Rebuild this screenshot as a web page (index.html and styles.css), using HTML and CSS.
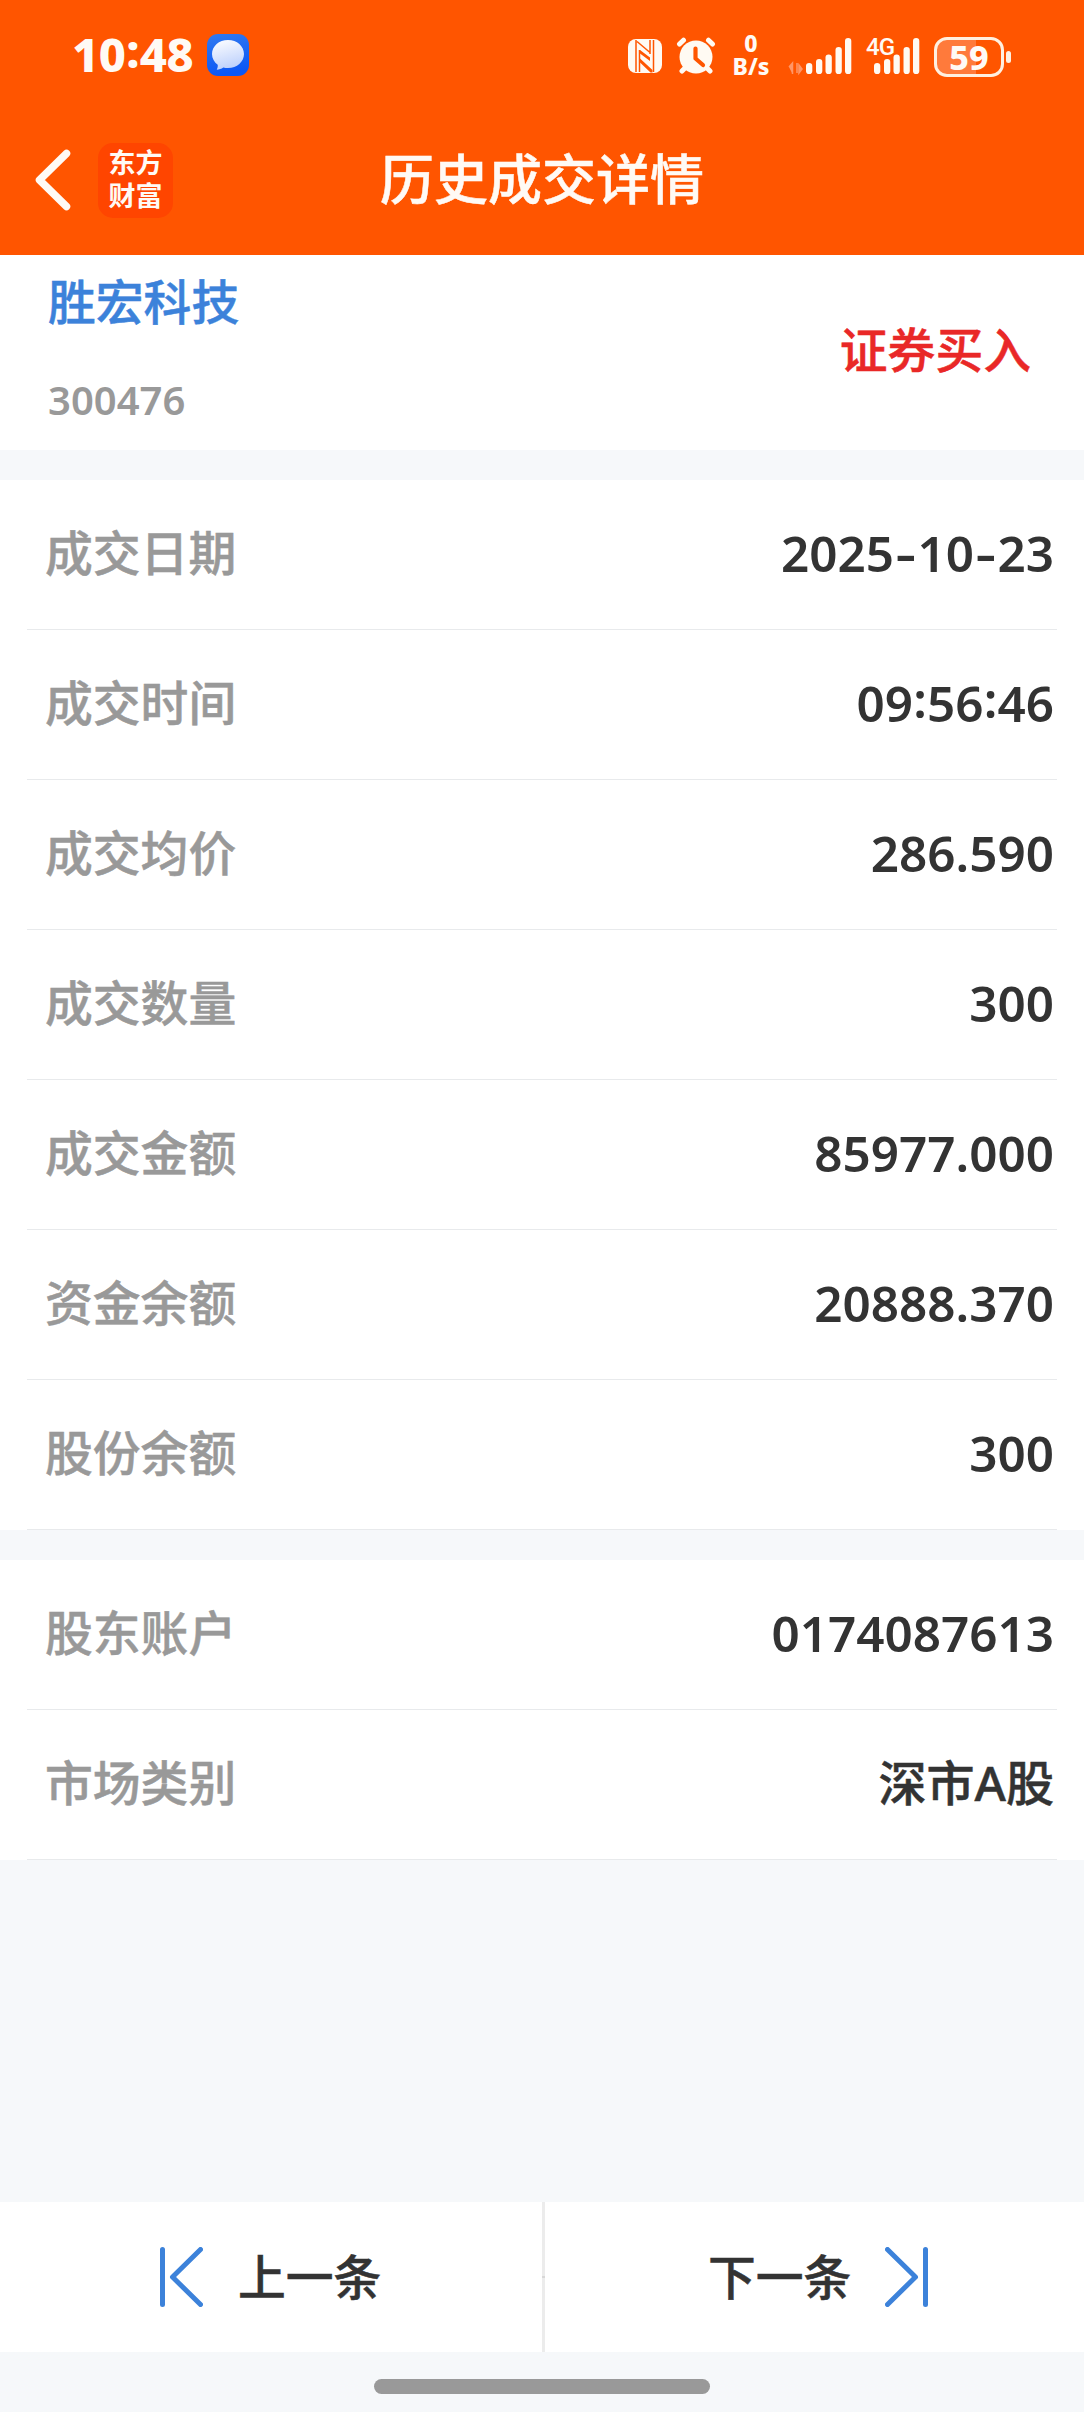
FILE: index.html
```html
<!DOCTYPE html>
<html lang="zh-CN">
<head>
<meta charset="utf-8">
<title>历史成交详情</title>
<link rel="stylesheet" href="styles.css">
</head>
<body>
<div class="screen">
  <header class="header">
    <div class="status">
      <span class="clock">10<i class="sep">:</i>48</span>
      <svg class="chat" width="42" height="42" viewBox="0 0 42 42">
        <defs>
          <linearGradient id="chatBg" x1="0" y1="0" x2="0.2" y2="1"><stop offset="0" stop-color="#317af0"/><stop offset="1" stop-color="#0b57f5"/></linearGradient>
          <linearGradient id="bubble" x1="0" y1="0" x2="0.3" y2="1"><stop offset="0" stop-color="#fff"/><stop offset="1" stop-color="#bfd2fc"/></linearGradient>
        </defs>
        <rect width="42" height="42" rx="11" fill="url(#chatBg)"/>
        <path d="M21 6C12 6 5 12.2 5 20c0 4.400 2.300 8.200 5.700 10.800.3 1.700-.2 3.400-1 4.900 2.500-.2 4.700-1 6.600-2.300C17.800 33.800 19.400 34 21 34c9 0 16-6.200 16-14S30 6 21 6z" fill="url(#bubble)"/>
      </svg>
      <div class="indicators">
        <svg class="nfc" width="34" height="34" viewBox="0 0 34 34">
          <rect width="34" height="34" rx="8" fill="#fffaf3"/>
          <g fill="none" stroke="#ff5500" stroke-width="1.500">
            <path d="M8 1v32M25.500 1v32M9 2.500l13 11M11.500 33V11M22 1v14"/>
          </g>
          <path d="M12 11l10 7.500v3.500L12 14.500zM12 19.500L24.500 31v2.500h-2L12 23.500z" fill="#ff5500"/>
        </svg>
        <svg class="alarm" width="40" height="38" viewBox="0 0 40 38">
          <g fill="none" stroke="#fffaf3" stroke-width="5" stroke-linecap="round">
            <path d="M3.500 7l4-3.800M36.500 7l-4-3.800M6 34l5-5M34 34l-5-5"/>
          </g>
          <circle cx="20" cy="20" r="16.500" fill="#fffaf3"/>
          <path d="M19.500 11.500v10l7.500 6.500" fill="none" stroke="#ff5500" stroke-width="4.200" stroke-linecap="round" stroke-linejoin="round"/>
        </svg>
        <div class="rate"><span>0</span><span>B/s</span></div>
        <svg class="signal" width="64" height="38" viewBox="0 0 64 38">
          <path d="M1 29l3.500-4v11M9 25v10M11 27v8l3-4z" fill="#ff9668" stroke="#ff9668" stroke-width="1.500"/>
          <g fill="#fffaf3"><rect x="18" y="25" width="6.300" height="11" rx="3.100"/><rect x="28" y="21" width="6.300" height="15" rx="3.100"/><rect x="37.500" y="16.500" width="6.300" height="19.500" rx="3.100"/><rect x="47.500" y="9" width="6.300" height="27" rx="3.100"/><rect x="57" y="0" width="6.300" height="36" rx="3.100"/></g>
        </svg>
        <div class="mobile">
          <span class="net">4G</span>
          <svg width="46" height="38" viewBox="0 0 46 38">
            <g fill="#fffaf3"><rect x="0" y="25" width="6.300" height="11" rx="3.100"/><rect x="10" y="21" width="6.300" height="15" rx="3.100"/><rect x="19.500" y="16.500" width="6.300" height="19.500" rx="3.100"/><rect x="29.500" y="9" width="6.300" height="27" rx="3.100"/><rect x="39" y="0" width="6.300" height="36" rx="3.100"/></g>
          </svg>
        </div>
        <div class="battery"><span class="level">59</span></div>
        <span class="nub"></span>
      </div>
    </div>
    <nav class="nav">
      <svg class="back" width="40" height="64" viewBox="0 0 40 64"><path d="M35.500 5.500L8.500 32l27 26.500" fill="none" stroke="#fffaf5" stroke-width="7.500" stroke-linecap="round" stroke-linejoin="round"/></svg>
      <div class="logo"><span>东方</span><span>财富</span></div>
      <h1 class="title">历史成交详情</h1>
    </nav>
  </header>

  <section class="stock">
    <div class="stock-id">
      <span class="stock-name">胜宏科技</span>
      <span class="stock-code">300476</span>
    </div>
    <span class="side">证券买入</span>
  </section>

  <section class="group">
    <div class="row"><span class="label">成交日期</span><span class="value">2025<i class="dash">-</i>10<i class="dash">-</i>23</span></div>
    <div class="row"><span class="label">成交时间</span><span class="value">09<i class="sep">:</i>56<i class="sep">:</i>46</span></div>
    <div class="row"><span class="label">成交均价</span><span class="value">286.590</span></div>
    <div class="row"><span class="label">成交数量</span><span class="value">300</span></div>
    <div class="row"><span class="label">成交金额</span><span class="value">85977.000</span></div>
    <div class="row"><span class="label">资金余额</span><span class="value">20888.370</span></div>
    <div class="row"><span class="label">股份余额</span><span class="value">300</span></div>
  </section>

  <section class="group">
    <div class="row"><span class="label">股东账户</span><span class="value">0174087613</span></div>
    <div class="row"><span class="label">市场类别</span><span class="value text">深市A股</span></div>
  </section>

  <footer class="footer">
    <div class="pager">
      <div class="page prev">
        <svg width="44" height="60" viewBox="0 0 44 60"><path d="M3.500 2.500v55M41.500 2.500L13.500 30l28 27.500" fill="none" stroke="#3c82da" stroke-width="5" stroke-linecap="round" stroke-linejoin="round"/></svg>
        <span class="page-text">上一条</span>
      </div>
      <span class="divider"></span>
      <div class="page next">
        <span class="page-text">下一条</span>
        <svg width="44" height="60" viewBox="0 0 44 60"><path d="M39.500 2.500v55M1.500 2.500L29.500 30l-28 27.500" transform="translate(1)" fill="none" stroke="#3c82da" stroke-width="5" stroke-linecap="round" stroke-linejoin="round"/></svg>
      </div>
    </div>
    <div class="home"></div>
  </footer>
</div>
</body>
</html>
```
FILE: styles.css
```css
* { box-sizing: border-box; }
body {
  margin: 0;
  background: #f6f8fa;
  font-family: "Noto Sans", "Noto Sans CJK SC", sans-serif;
  font-weight: 500;
  color: #333;
}
i { font-style: normal; }
svg { display: block; flex: none; }
.screen {
  width: 1084px;
  height: 2412px;
  display: flex;
  flex-direction: column;
}

/* Header */
.header { height: 255px; background: #ff5500; color: #fffaf5; }
.status { height: 110px; display: flex; align-items: flex-start; padding-left: 72px; }
.clock {
  width: 135px;
  margin-top: 25px;
  font-size: 47px;
  line-height: 58px;
  font-weight: 800;
  letter-spacing: -0.3px;
  white-space: nowrap;
}
.chat { margin-top: 34px; }
.indicators { display: flex; align-items: flex-start; margin-left: 379px; padding-top: 37px; }
.nfc { margin-top: 2px; }
.alarm { margin-left: 14px; }
.rate {
  width: 40px;
  margin: -5px 0 0 15px;
  display: flex;
  flex-direction: column;
  align-items: center;
  font-size: 23px;
  line-height: 23px;
  font-weight: 800;
}
.signal { margin: 1px 0 0 17px; }
.mobile { position: relative; margin: 1px 0 0 22px; }
.net {
  position: absolute;
  left: -8px;
  top: -4px;
  font: 500 24px/26px "Roboto", sans-serif;
  letter-spacing: -1px;
}
.battery {
  width: 70px;
  height: 40px;
  margin-left: 14px;
  border: 3px solid #fff0e0;
  border-radius: 13px;
  background: linear-gradient(90deg, #ff7a3b 39px, transparent 39px);
  display: flex;
  align-items: center;
  justify-content: center;
}
.level { font-size: 34px; line-height: 34px; font-weight: 800; }
.nub { width: 5px; height: 12px; margin: 14px 0 0 2px; border-radius: 3px; background: #fff0e0; }

.nav { height: 145px; display: flex; align-items: flex-start; padding: 33px 0 0 31px; }
.back { margin-top: 5px; }
.logo {
  width: 75px;
  height: 75px;
  margin-left: 27px;
  padding-top: 2px;
  border-radius: 15px;
  background: #ff4500;
  display: flex;
  flex-direction: column;
  align-items: center;
  font-family: "Noto Sans CJK SC", sans-serif;
  font-size: 27px;
  line-height: 33px;
  font-weight: 700;
}
.title {
  margin: -2px 0 0 207px;
  font-family: "Noto Sans CJK SC", sans-serif;
  font-size: 54px;
  line-height: 72px;
  font-weight: 500;
  -webkit-text-stroke: 0.5px currentColor;
}

/* Stock summary */
.stock {
  height: 195px;
  padding: 0 53px 0 48px;
  display: flex;
  justify-content: space-between;
  background: #fff;
}
.stock-id { display: flex; flex-direction: column; }
.stock-name, .side, .label, .page-text {
  font-family: "Noto Sans CJK SC", sans-serif;
  font-size: 47.800px;
  line-height: 70px;
  -webkit-text-stroke: 0.5px currentColor;
}
.stock-name { margin-top: 10px; color: #3c82da; }
.stock-code { margin-top: 41px; font-size: 40px; line-height: 48px; font-weight: 600; color: #999; }
.side { margin-top: 58px; color: #e92827; }

/* Detail rows */
.group { margin-top: 30px; background: #fff; }
.row {
  height: 150px;
  margin: 0 27px;
  padding: 0 3px 3px 18px;
  display: flex;
  align-items: center;
  justify-content: space-between;
  border-bottom: 1px solid #e8eaec;
}
.label { padding-bottom: 5px; color: #999; }
.value { font-size: 49.400px; line-height: 60px; font-weight: 600; }
.value.text { font-size: 48px; font-weight: 500; line-height: 70px; -webkit-text-stroke: 0.5px currentColor; }
.sep { display: inline-block; width: 14px; text-align: center; transform: translateY(-4px); }
.dash { display: inline-block; width: 23.500px; text-align: center; transform: scaleX(1.3); }

/* Footer */
.footer { margin-top: auto; height: 210px; }
.pager { height: 150px; display: flex; background: #fff; }
.page { display: flex; align-items: center; }
.page-text { padding-bottom: 5px; }
.prev { width: 542px; padding-left: 159px; gap: 35px; }
.next { flex: 1; padding-left: 163px; gap: 34px; }
.divider { width: 3px; background: linear-gradient(#ececec 74px, #d8d8d8 74px, #d8d8d8 76px, #ececec 76px); }
.home { width: 336px; height: 15px; margin: 27px 0 0 374px; border-radius: 8px; background: #999; }
```
